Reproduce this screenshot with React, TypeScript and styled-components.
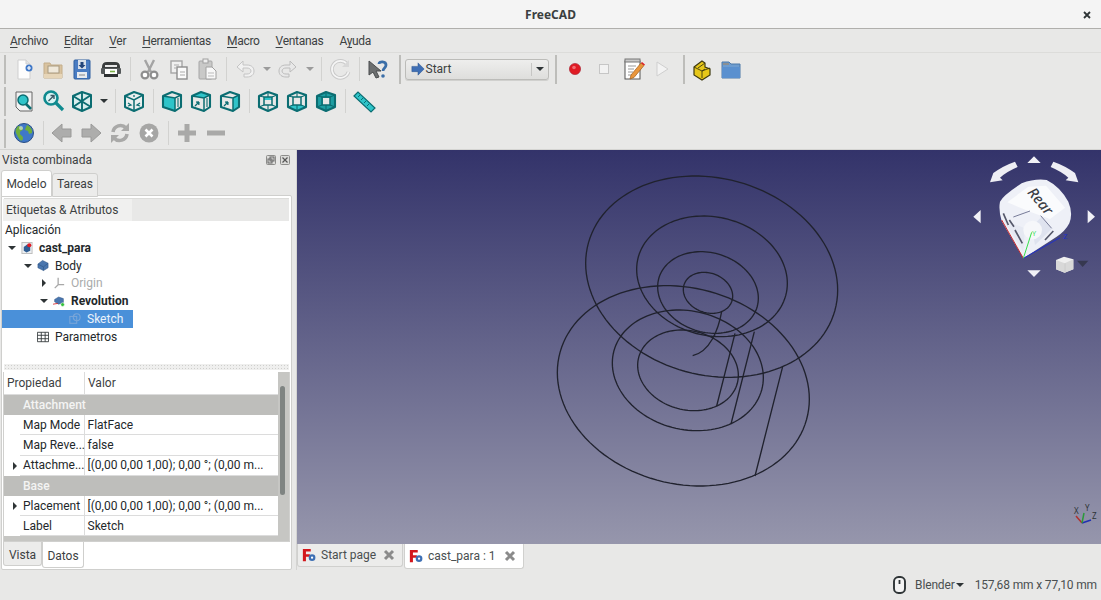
import React from 'react';
import styled, { createGlobalStyle } from 'styled-components';

const Global = createGlobalStyle`
  html, body { margin: 0; padding: 0; height: 100%; overflow: hidden; background: #e8e8e7; }
  #root { height: 100%; }
  * { box-sizing: border-box; }
`;

const Page = styled.div`
  width: 1101px; height: 600px; display: flex; flex-direction: column;
  background: #e8e8e7; color: #2e3436;
  font-family: Roboto, "Noto Sans", sans-serif; font-size: 12px; overflow: hidden;
`;
const TitleBar = styled.header`
  height: 29px; flex: none; background: #f4f4f4; border-bottom: 1px solid #b0afac;
  display: flex; align-items: center; justify-content: center; position: relative;
  font-family: "Noto Sans", sans-serif; font-weight: 700; font-size: 12px; color: #3b3f40;
`;
const CloseGlyph = styled.svg`
  position: absolute; right: 10px; top: 11px; width: 8px; height: 8px;
`;
const MenuBar = styled.nav`
  height: 24px; flex: none; display: flex; align-items: center; padding: 1px 0 0 2px;
  border-bottom: 1px solid #dcdcda; letter-spacing: -0.3px;
`;
const MenuItem = styled.span`
  padding: 0 8px; color: #3c4142; white-space: nowrap;
  u { text-decoration-thickness: 1px; text-underline-offset: 2px; }
`;
const ToolRow = styled.div`
  height: 32px; flex: none; display: flex; align-items: center; padding-left: 4px;
`;
const Grip = styled.i<{ $ml?: number; $mr?: number }>`
  width: 2px; height: 29px; flex: none; background: #bdbdba;
  margin-left: ${p => p.$ml ?? 0}px; margin-right: ${p => p.$mr ?? 3.5}px;
`;
const ToolBtn = styled.span`
  width: 29px; height: 32px; flex: none; display: flex; align-items: center; justify-content: center;
`;
const Caret = styled.span<{ $pale?: boolean }>`
  width: 14px; flex: none; display: flex; justify-content: center;
  &::before {
    content: ''; border-style: solid; border-width: 4px 4.5px 0 4.5px;
    border-color: ${p => (p.$pale ? '#9b9b9b' : '#2e3436')} transparent transparent transparent;
  }
`;
const Sep = styled.span`
  width: 9px; height: 24px; flex: none; display: flex; justify-content: center;
  &::before { content: ''; width: 1px; background: #d2d2d0; }
`;
const Combo = styled.div`
  width: 144px; height: 21px; flex: none; border: 1px solid #bcbcb9; border-radius: 3px;
  background: linear-gradient(#eeeeed, #dededc); display: flex; align-items: center;
  padding-left: 5px; color: #3c4142; box-shadow: 0 1px 0 #d0d0ce;
`;
const ComboLabel = styled.span` margin-left: 1px; flex: 1; `;
const ComboCaret = styled.span`
  width: 17px; height: 13px; border-left: 1px solid #c6c6c4; display: flex; align-items: center; justify-content: center;
  &::before { content: ''; border-style: solid; border-width: 4px 4.5px 0 4.5px; border-color: #2e3436 transparent transparent transparent; }
`;
const Main = styled.main`
  flex: 1; min-height: 0; display: flex; border-top: 1px solid #d4d4d2;
`;
const Dock = styled.aside`
  width: 292px; flex: none; display: flex; flex-direction: column; padding-left: 1px;
`;
const DockTitle = styled.div`
  height: 19px; margin-bottom: 1px; flex: none; display: flex; align-items: center; padding-left: 1px; color: #3c4142;
  justify-content: space-between; padding-right: 2px;
`;
const DockBtns = styled.span` display: flex; gap: 4px; `;
const TabRow = styled.div`
  display: flex; flex: none; align-items: flex-start; height: 26px; position: relative; z-index: 1;
`;
const Tab = styled.span<{ $active?: boolean; $w: number }>`
  width: ${p => p.$w}px; flex: none; display: flex; align-items: center; justify-content: center;
  color: #3c4142;
  border: 1px solid #cfcfcd;
  background: ${p => (p.$active ? '#ffffff' : '#ececeb')};
  height: ${p => (p.$active ? 27 : 24)}px;
  margin-top: ${p => (p.$active ? 0 : 3)}px;
  padding-bottom: ${p => (p.$active ? 0 : 2)}px;
  border-radius: 3px 3px 0 0;
`;
const DockBody = styled.div`
  flex: 1; min-height: 0; background: #fff; border: 1px solid #cfcfcd; border-radius: 0 2px 2px 2px;
  margin-top: -1px; display: flex; flex-direction: column; padding: 1px;
`;
const TreeFrame = styled.div`
  height: 166px; flex: none; margin: 1px 1px 0; display: flex; flex-direction: column; background: #fff;
  border-top: 1px solid #dcdcda;
`;
const TreeHead = styled.div`
  height: 22px; flex: none; background: #e8e8e7; display: flex; margin-left: -1px;
`;
const TreeHeadCell = styled.span`
  width: 129px; background: #f0f0ef; display: flex; align-items: center; padding-left: 3px; color: #3c4142;
`;
const TreeRow = styled.div<{ $selected?: boolean; $depth: number; $bold?: boolean; $dim?: boolean }>`
  height: 17.8px; width: 131px; margin-left: -2px; display: flex; align-items: center; flex: none;
  padding-left: ${p => p.$depth * 16 + 3}px; white-space: nowrap;
  background: ${p => (p.$selected ? '#4a90d9' : 'transparent')};
  color: ${p => (p.$selected ? '#eaf2fb' : p.$dim ? '#a9abab' : '#23282a')};
  font-weight: ${p => (p.$bold ? 700 : 400)};
`;
const TreeTop = styled.div` height: 18px; flex: none; display: flex; align-items: center; padding-left: 1px; color: #23282a; `;
const TreeArrow = styled.span<{ $open?: boolean; $none?: boolean }>`
  width: 14px; margin-right: 2px; flex: none; display: flex; justify-content: center;
  &::before {
    content: ''; border-style: solid; visibility: ${p => (p.$none ? 'hidden' : 'visible')};
    border-width: ${p => (p.$open ? '4px 4px 0 4px' : '4px 0 4px 4px')};
    border-color: ${p => (p.$open ? '#2e3436 transparent transparent transparent' : 'transparent transparent transparent #2e3436')};
  }
`;
const TreeIcon = styled.span` width: 12px; height: 14px; flex: none; margin-right: 6px; display: flex; align-items: center; justify-content: center; `;
const Splitter = styled.div`
  height: 6px; flex: none; margin: 0 1px 2px;
  background-image: radial-gradient(#cfcfcd 0.6px, transparent 0.8px); background-size: 3px 3px;
  background-color: #efefee;
`;
const PropFrame = styled.div`
  height: 170px; flex: none; display: flex; background: #c6c6c3; border: 1px solid #d0d0ce; border-top: 0;
`;
const PropTable = styled.div` width: 274px; flex: none; display: flex; flex-direction: column; background: #fff; `;
const PropHead = styled.div`
  height: 23px; flex: none; display: flex; align-items: center; background: #fff; color: #3c4142;
  border-bottom: 1px solid #dcdcdc;
`;
const HeadCell = styled.span<{ $w?: number }>`
  ${p => (p.$w ? `width:${p.$w}px;flex:none;border-right:1px solid #dcdcdc;` : 'flex:1;')}
  height: 100%; display: flex; align-items: center; padding-left: 3px;
`;
const GroupRow = styled.div`
  height: 20px; flex: none; background: #bebebb; color: #f4f4f3; display: flex; align-items: center; padding-left: 19px; font-weight: 500;
`;
const PropRow = styled.div` height: 20.3px; flex: none; display: flex; align-items: stretch; color: #23282a; `;
const PropGutter = styled.span`
  width: 16px; flex: none; display: flex; align-items: center; justify-content: flex-end; padding-right: 1px;
`;
const PropArrow = styled.i`
  border-style: solid; border-width: 4px 0 4px 4px; border-color: transparent transparent transparent #2e3436; margin-right: 2px;
`;
const PropName = styled.span`
  width: 65px; flex: none; display: flex; align-items: center; padding-left: 3px; white-space: nowrap;
  border-bottom: 1px solid #dcdcdc; border-right: 1px solid #dcdcdc;
`;
const PropValue = styled.span`
  flex: 1; display: flex; align-items: center; padding-left: 2.5px; white-space: nowrap;
  border-bottom: 1px solid #dcdcdc;
`;
const PropFill = styled.div` flex: 1; background: #c6c6c3; `;
const ScrollTrack = styled.div` flex: 1; position: relative; `;
const ScrollThumb = styled.div`
  position: absolute; left: 2px; top: 14px; width: 5px; height: 109px; border-radius: 3px; background: #7f8482;
`;
const BottomTabs = styled.div` height: 26px; flex: none; display: flex; align-items: flex-start; `;
const BTab = styled.span<{ $active?: boolean; $w: number }>`
  width: ${p => p.$w}px; flex: none; display: flex; align-items: center; justify-content: center; color: #3c4142;
  height: ${p => (p.$active ? 26 : 24)}px; padding-top: 2px;
  background: ${p => (p.$active ? '#fff' : '#ececeb')};
  border: 1px solid #cfcfcd; border-top: 0; border-radius: 0 0 3px 3px;
`;
const Gap = styled.div` width: 5px; flex: none; background: #e8e8e7; border-right: 1px solid #d4d4d2; `;
const Center = styled.section` flex: 1; min-width: 0; display: flex; flex-direction: column; `;
const Viewport = styled.div`
  height: 394px; flex: none; position: relative; overflow: hidden;
  background: linear-gradient(#33336a, #9696ac);
`;
const Wire = styled.svg` position: absolute; left: 0; top: 0; width: 804px; height: 394px; `;
const NavCube = styled.svg` position: absolute; right: 0; top: 0; width: 151px; height: 140px; `;
const MiniAxis = styled.svg` position: absolute; right: 4px; bottom: 14px; width: 30px; height: 30px; `;
const DocTabs = styled.div` height: 26px; flex: none; display: flex; align-items: flex-start; `;
const DocTab = styled.span<{ $active?: boolean; $w: number }>`
  width: ${p => p.$w}px; flex: none; display: flex; align-items: center; padding-left: 4px; margin-right: 1px;
  height: ${p => (p.$active ? 25 : 23)}px; color: #4a4f50;
  background: ${p => (p.$active ? '#fff' : '#ececeb')};
  border: 1px solid #d0d0ce; border-top: 0; border-radius: 0 0 3px 3px;
`;
const DocLabel = styled.span` margin-left: 5px; white-space: nowrap; flex: 1; `;
const DocClose = styled.svg` width: 12px; height: 12px; flex: none; margin-right: 7px; `;
const StatusBar = styled.footer`
  height: 30px; flex: none; display: flex; align-items: center; justify-content: flex-end; padding-right: 4px; color: #4a4f50;
  letter-spacing: -0.15px;
`;
const StatusMode = styled.span` display: flex; align-items: center; margin-left: 9px; `;
const StatusDim = styled.span` margin-left: 11px; `;
const ModeCaret = styled.i`
  margin-left: 1px; border-style: solid; border-width: 4px 4px 0 4px; border-color: #2e3436 transparent transparent transparent;
`;

/* ---------- icons ---------- */
const S: React.FC<{ children: React.ReactNode; s?: number }> = ({ children, s = 24 }) => (
  <svg width={s} height={s} viewBox="0 0 24 24">{children}</svg>
);
const T = '#0f8a8f', TF = '#2fc4c9', TD = '#0b6d72';

const NewDoc = () => <S><path d="M6 3h8l4 4v15H6z" fill="#fdfdfd" stroke="#cfcfcf" /><path d="M14 3v4h4" fill="#e4e4e4" stroke="#cfcfcf" /><circle cx="17" cy="11" r="3.500" fill="#3f78c8" /><path d="M15 11h4M17 9v4" stroke="#fff" strokeWidth="1.200" /></S>;
const Open = () => <S><path d="M3 6h6l1 2h11v13H3z" fill="#d9c3a0" stroke="#c4ae8a" /><rect x="7" y="9" width="11" height="7" fill="#efe8da" stroke="#a89a80" /><path d="M3 17h18v4H3z" fill="#e6d5b8" /></S>;
const Save = () => <S><rect x="4" y="3" width="16" height="19" rx="1" fill="#4a7cc2" stroke="#2f5f9f" /><path d="M8 3h8v9H8z" fill="#d7dfe9" /><path d="M10.500 5h3v3h2l-3.500 3.500L8.500 8h2z" fill="#23457a" /><rect x="7" y="15" width="10" height="6" fill="#e8ebef" /><path d="M9 18h6" stroke="#888" /></S>;
const Print = () => <S><path d="M3 10q0-5 5-5h8q5 0 5 5v3H3z" fill="#3a3d3d" /><rect x="6" y="8" width="12" height="2" fill="#e8e8e8" /><rect x="2" y="11" width="20" height="6" rx="1" fill="#55595a" /><rect x="6" y="12" width="12" height="5" fill="#fff" /><path d="M11 14.500h5" stroke="#7db24b" strokeWidth="1.600" /><rect x="5" y="17" width="14" height="3" fill="#2e3132" /></S>;
const Cut = () => <S><path d="M8 3l6 12M17 3l-6 12" stroke="#a4a4a4" strokeWidth="2.400" fill="none" /><circle cx="8" cy="18" r="3.400" fill="#fff" stroke="#8e8e8e" strokeWidth="2.200" /><circle cx="17" cy="18" r="3.400" fill="#fff" stroke="#8e8e8e" strokeWidth="2.200" /></S>;
const Copy = () => <S><rect x="5" y="4" width="11" height="12" fill="#f0f0f0" stroke="#a5a5a5" strokeWidth="1.400" /><rect x="11" y="10" width="10" height="12" fill="#fafafa" stroke="#8e8e8e" strokeWidth="1.400" /><path d="M8 8h5M8 11h2M14 15h5M14 18h5" stroke="#aaa" /></S>;
const Paste = () => <S><rect x="4" y="4" width="13" height="18" rx="1" fill="#c9c9c8" stroke="#a6a6a6" /><rect x="8" y="2" width="5" height="4" fill="#eee" stroke="#a0a0a0" /><path d="M11 10h6l4 4v8H11z" fill="#f8f8f8" stroke="#a0a0a0" /><path d="M13 16h6M13 19h6" stroke="#bbb" /></S>;
const Undo = () => <S><path d="M4 10l6-6v4h4c5 0 7 3 7 6 0 4-3 6-7 6h-3v-3h3c2 0 4-1 4-3s-2-3-4-3h-4v4z" fill="#f1f1f1" stroke="#c4c4c4" /></S>;
const Redo = () => <S><path d="M20 10l-6-6v4h-4c-5 0-7 3-7 6 0 4 3 6 7 6h3v-3h-3c-2 0-4-1-4-3s2-3 4-3h4v4z" fill="#e8e8e8" stroke="#bcbcbc" /></S>;
const RefreshPale = () => <S><path d="M19 7a8.500 8.500 0 1 0 1.500 8" fill="none" stroke="#c9c9c9" strokeWidth="3.600" /><path d="M19 7a8.500 8.500 0 1 0 1.500 8" fill="none" stroke="#f5f5f5" strokeWidth="1.600" /><path d="M21 3v7h-7z" fill="#d8d8d8" /></S>;
const WhatsThis = () => <S><path d="M3 4l0 14 4-3 3 6 3-1-3-6 5 0z" fill="#6c6f70" stroke="#4a4d4e" /><path d="M13 7c0-3 7-3 7 1 0 3-3 2.800-3 6" fill="none" stroke="#3b6ea8" strokeWidth="2.800" /><circle cx="17" cy="19" r="1.800" fill="#3b6ea8" /></S>;
const Arrow16 = () => <svg width="14" height="14" viewBox="0 0 16 16"><path d="M1 5h7V1l7 7-7 7v-4H1z" fill="#3f6fb5" stroke="#2b5590" strokeWidth=".6" /></svg>;
const Rec = () => <S><circle cx="12" cy="12" r="5.600" fill="#e01b24" stroke="#a51d2d" strokeWidth=".6" /><circle cx="11" cy="10.500" r="1.800" fill="#f26d73" /></S>;
const StopSq = () => <S><rect x="7.500" y="7.500" width="9" height="9" fill="#f2f2f2" stroke="#c6c6c6" /></S>;
const Macro = () => <S><rect x="4" y="4" width="15" height="18" fill="#fff" stroke="#555" /><rect x="4" y="2" width="15" height="3" fill="#c9c9c9" stroke="#777" /><path d="M7 9h8M7 12h6M7 15h5M7 18h8" stroke="#999" /><path d="M10 18l10-12 3 2.500-10 12-4 1.500z" fill="#e9963c" stroke="#a25f1a" strokeWidth=".7" /><path d="M20 6l1-1 3 2.500-1 1z" fill="#e01b24" /></S>;
const PlayO = () => <S><path d="M7 5l11 7-11 7z" fill="#f3f3f3" stroke="#cfcfcf" /></S>;
const Part = () => <S><path d="M4 10l8-6 3 2v4l5 2v6l-8 5-8-5z" fill="#e6c71a" stroke="#3f3a10" strokeWidth="1.200" /><path d="M4 10l8 4 3-2M12 14v7M15 6l-7 5M12 14l8-3" fill="none" stroke="#3f3a10" strokeWidth=".9" /></S>;
const Folder = () => <S><path d="M3 5h7l2 2h9v14H3z" fill="#6d9ccf" stroke="#4d79a8" /><path d="M3 10h18v11H3z" fill="#5a90cf" /><path d="M4 6h6v2H4z" fill="#8b8f92" /></S>;
const FitAll = () => <S><path d="M4 3h16v19H8l-4-4z" fill="#f2f2f2" stroke="#666" /><circle cx="11" cy="11" r="5" fill="#2fc4c9" stroke={TD} strokeWidth="1.500" /><path d="M14 15l5 5" stroke={TD} strokeWidth="2.600" /></S>;
const FitSel = () => <S><circle cx="10" cy="9" r="6.500" fill="#d8f4f4" stroke={T} strokeWidth="2.600" /><path d="M7.500 12l5-5M9.500 6.500h3.500V10" stroke="#3d5866" strokeWidth="1.400" fill="none" /><path d="M15 14l7 7" stroke={T} strokeWidth="3.200" /></S>;

const HEX = 'M3 7l9-4 9 3v12l-9 4-9-4z';
const IsoCube = () => <S><path d={HEX} fill="#d9eeee" stroke={TD} strokeWidth="2" strokeLinejoin="round" /><path d="M3 7l18 11M21 6L3 18M12 3v19" stroke={TD} strokeWidth="1.900" /></S>;
const HomeCube = () => <S><path d={HEX} fill="#e9efef" stroke={TD} strokeWidth="2" strokeLinejoin="round" /><path d="M3 7l9 4 9-5M12 11v11" fill="none" stroke={TD} strokeWidth="1.500" /><path d="M12 6v2M6 14l3 2-3 1M18 14l-3 2 3 1" fill="none" stroke={TD} strokeWidth="1.300" /></S>;
const FaceCube: React.FC<{ f: 'front' | 'top' | 'right' }> = ({ f }) => (
  <S>
    {f === 'front' && <path d="M3 7l12 2v13l-12-4z" fill={TF} />}
    <path d="M3 7l9-4 9 3-6 3z" fill={f === 'top' ? TF : 'none'} />
    <path d="M15 9l6-3v12l-6 4z" fill={f === 'right' ? TF : 'none'} />
    <path d="M3 7l9-4 9 3v12l-6 4-12-4z" fill="none" stroke={TD} strokeWidth="2.100" strokeLinejoin="round" />
    <path d="M3 7l12 2 6-3M15 9v13" fill="none" stroke={TD} strokeWidth="1.500" />
    {f !== 'front' && <path d="M6 17l4-4M10 13l-.2 3M10 13l-3 .2" fill="none" stroke={TD} strokeWidth="1.300" />}
    {f !== 'right' && <path d="M18 9v9" stroke={TD} strokeWidth="1.100" />}
  </S>
);
const BackCube: React.FC<{ f: 'rear' | 'bottom' | 'left' }> = ({ f }) => (
  <S>
    {f === 'left' && <path d={HEX} fill="#1d9ea2" />}
    {f === 'left' && <rect x="9" y="9" width="7" height="7" fill="#e8e8e7" />}
    {f === 'rear' && <path d="M8 8h8v3H8z" fill={TF} />}
    {f === 'bottom' && <path d="M8 16h8l5 2-9 4-9-4z" fill={TF} />}
    <path d={HEX} fill="none" stroke={TD} strokeWidth="2.100" strokeLinejoin="round" />
    <rect x="8" y="8" width="8" height="8" fill="none" stroke={TD} strokeWidth="1.500" />
    <path d="M3 7l5 1M21 6l-5 2M3 18l5-2M21 18l-5-2M12 3v5M12 22v-6" stroke={TD} strokeWidth="1.100" />
  </S>
);
const Ruler = () => <S><path d="M2 7l4-4 17 16-4 4z" fill="#2fc4c9" stroke={TD} strokeWidth="1.200" /><path d="M8 6l-2 2M11 9l-2 2M14 12l-2 2M17 15l-2 2" stroke={TD} /></S>;
const Globe = () => <S><circle cx="12" cy="12" r="9.500" fill="#3f78c8" stroke="#2a4f85" /><path d="M6 5c3 0 5 1 5 3s-3 1-3 4 3 2 3 5-2 3-3 2-3-5-4-7 0-5 2-7zM15 4c3 1 6 5 5 8l-3 1-1-3-3-1 1-3z" fill="#6fae3c" /><circle cx="9" cy="7" r="2" fill="#dfeafa" opacity=".6" /></S>;
const GA = ({ flip }: { flip?: boolean }) => <S><g transform={flip ? 'matrix(-1 0 0 1 24 0)' : undefined}><path d="M12 3v5h9v8h-9v5L2 12z" fill="#adadac" stroke="#9a9a99" /></g></S>;
const GRefresh = () => <S><path d="M5 11a7.500 7.500 0 0 1 13-4" fill="none" stroke="#a9a9a8" strokeWidth="3.600" /><path d="M19 13a7.500 7.500 0 0 1-13 4" fill="none" stroke="#a9a9a8" strokeWidth="3.600" /><path d="M21 2v8h-8zM3 22v-8h8z" fill="#a9a9a8" /></S>;
const GStop = () => <S><circle cx="12" cy="12" r="9.500" fill="#a6a6a5" /><path d="M8.500 8.500l7 7M15.500 8.500l-7 7" stroke="#fff" strokeWidth="2.600" /></S>;
const GPlus = () => <S><path d="M9.500 3h5v6.500H21v5h-6.500V21h-5v-6.500H3v-5h6.500z" fill="#a9a9a8" /></S>;
const GMinus = () => <S><rect x="3" y="9.500" width="18" height="5" fill="#a9a9a8" /></S>;
const FcLogo = () => <svg width="14" height="14" viewBox="0 0 16 16"><path d="M1 1h9v3H4.500v3H9v3H4.500v5H1z" fill="#d3171c" /><circle cx="11.500" cy="11" r="3.800" fill="#3d6fb4" /><circle cx="11.500" cy="11" r="1.300" fill="#fff" /></svg>;

const TreeDoc = () => <svg width="13" height="14" viewBox="0 0 13 14"><rect x="1" y="1" width="11" height="12" fill="#eceff2" stroke="#bbb" /><path d="M3 6l4-3 3 2v5l-4 2-3-2z" fill="#2f5d92" /><circle cx="9" cy="4" r="2.200" fill="#e01b24" /></svg>;
const TreeBody = () => <svg width="13" height="13" viewBox="0 0 13 13"><path d="M1 5l5-4 6 3v5l-5 3-6-3z" fill="#4a76ae" stroke="#2c5283" strokeWidth=".6" /><path d="M1 5l6 3 5-4M7 8v4" fill="none" stroke="#2c5283" strokeWidth=".6" /></svg>;
const TreeOrigin = () => <svg width="14" height="14" viewBox="0 0 14 14"><path d="M6 1v8M6 9l7 0M6 9l-4 4" stroke="#a8a8a8" strokeWidth="1.500" fill="none" /></svg>;
const TreeRev = () => <svg width="15" height="14" viewBox="0 0 15 14"><path d="M2 5l5-3 6 2v5l-6 2-5-3z" fill="#4a76ae" stroke="#2c5283" strokeWidth=".6" /><path d="M0 11l6-1" stroke="#d3171c" /><circle cx="12" cy="11.500" r="2.300" fill="#33c13a" stroke="#fff" strokeWidth=".6" /></svg>;
const TreeSketch = () => <svg width="14" height="14" viewBox="0 0 14 14"><rect x="1" y="4" width="8" height="8" fill="none" stroke="#7aa6d8" strokeWidth="1.200" /><circle cx="9" cy="5" r="4" fill="none" stroke="#7aa6d8" strokeWidth="1.200" /></svg>;
const TreeSheet = () => <svg width="14" height="12" viewBox="0 0 14 12"><path d="M.5.500h13v11H.5zM.5 4h13M.5 8h13M5 .500v11M9.500 .500v11" fill="none" stroke="#2e3436" /></svg>;
const Mouse = () => <svg width="13" height="18" viewBox="0 0 13 18"><rect x="1" y="1" width="11" height="16" rx="4.500" fill="#f4f4f4" stroke="#2e3436" strokeWidth="1.900" /><path d="M6.500 4v4" stroke="#2e3436" strokeWidth="1.800" /></svg>;
const XClose = () => <DocClose viewBox="0 0 12 12"><path d="M2 2l8 8M10 2l-8 8" stroke="#8b8b8b" strokeWidth="3" /></DocClose>;
const Tiny = ({ kind }: { kind: 'float' | 'close' }) => (
  <svg width="10" height="10" viewBox="0 0 10 10">
    <rect x=".5" y=".5" width="9" height="9" rx="1" fill="#dcdcda" stroke="#8d8d8b" />
    {kind === 'close' ? <path d="M2.500 2.500l5 5M7.500 2.500l-5 5" stroke="#555" strokeWidth="1.200" /> : <><rect x="2" y="4" width="4" height="4" fill="none" stroke="#666" /><rect x="4" y="2" width="4" height="4" fill="none" stroke="#666" /></>}
  </svg>
);

/* ---------- wireframe: tilted ellipses given by their extents ---------- */
const tilted = (cx: number, cy: number, W: number, H: number, dy: number) => {
  const h = Math.sqrt(H * H - dy * dy);
  let d = '';
  for (let i = 0; i < 120; i++) {
    const t = (i / 120) * Math.PI * 2;
    d += `${i ? 'L' : 'M'}${(cx + W * Math.cos(t)).toFixed(1)} ${(cy + dy * Math.cos(t) + h * Math.sin(t)).toFixed(1)}`;
  }
  return d + 'Z';
};
const rings: [number, number, number, number, number][] = [
  [515, 320, 378, 302, 40],
  [516, 319, 226, 181, 21],
  [504, 367.5, 151, 122.5, 17],
  [504, 368.5, 74, 61.5, 10],
  [430, 647.5, 378, 300.5, 40],
  [443.5, 601, 226.5, 181, 22],
  [444, 601, 151, 121, 15],
];
const Wireframe = () => (
  <Wire viewBox="0 0 804 394">
    <g transform="translate(243 20) scale(.33333)" fill="none" stroke="#20222e" strokeWidth="4">
      {rings.map((r, i) => <path key={i} d={tilted(...r)} />)}
      <path d="M545 425C535 480 510 545 458 557" />
      <path d="M585 490L530 708M643 485L573 762M728 590L645 918" />
    </g>
  </Wire>
);

const Nav = () => (
  <NavCube viewBox="0 15 453 420">
    <path d="M120 112L130 84Q160 62 195 50L203 66Q170 80 150 98L158 106z" fill="#eeeef4" />
    <path d="M385 112L375 84Q345 62 310 50L302 66Q335 80 355 98L347 106z" fill="#eeeef4" />
    <path d="M252 34l20 20h-40zM252 396l20-20h-40zM70 215l22-20v40zM435 215l-22-20v40z" fill="#f1f1f6" />
    <path d="M150 170Q160 150 215 115Q255 100 290 105Q330 125 355 170Q370 205 358 235Q345 260 320 275L220 340L155 228Q145 195 150 170z" fill="#eef0f7" />
    <path d="M172 172L235 125L288 122L345 188L300 222L240 200z" fill="#fafbfd" />
    <path d="M160 225L220 320L225 250z" fill="#e6e9f2" />
    <path d="M275 215L305 252L255 300L245 245z" fill="#dfe3ef" />
    <circle cx="248" cy="255" r="28" fill="#f6f7fa" />
    <path d="M190 216L240 198M272 212L305 250" stroke="#777b98" strokeWidth="3" />
    <path d="M160 205L175 240M178 225L192 245M195 255L217 295M285 285L310 258" stroke="#55586a" strokeWidth="5" />
    <text x="0" y="0" transform="translate(230 143) rotate(50)" fontFamily="Noto Sans, sans-serif" fontSize="44" fontStyle="italic" fontWeight="500" fill="#3a3d45">Rear</text>
    <path d="M155 225L220 340" stroke="#c8262a" strokeWidth="3" />
    <path d="M220 340L330 278" stroke="#2030c8" strokeWidth="3" />
    <path d="M220 340L245 262" stroke="#35e04a" strokeWidth="3" />
    <text x="246" y="272" fontSize="22" fontFamily="Noto Sans, sans-serif" fill="#3fe05a">Y</text>
    <text x="340" y="282" fontSize="22" fontFamily="Noto Sans, sans-serif" fill="#2030c8">Z</text>
    <path d="M318 345l24-10 28 8v30l-26 10-26-10z" fill="#efefef" />
    <path d="M318 345l26 10 26-12v30l-26 10-26-10z" fill="#d8d8d8" />
    <path d="M345 355v28" stroke="#c4c4c4" strokeWidth="2" />
    <path d="M381 347h34l-17 19z" fill="#363850" />
  </NavCube>
);

const Btn = ({ children }: { children: React.ReactNode }) => <ToolBtn>{children}</ToolBtn>;

export default function App() {
  return (
    <Page>
      <Global />
      <TitleBar>
        FreeCAD
        <CloseGlyph viewBox="0 0 8 8"><path d="M1 1l6 6M7 1L1 7" stroke="#2e3436" strokeWidth="1.800" /></CloseGlyph>
      </TitleBar>
      <MenuBar>
        <MenuItem><u>A</u>rchivo</MenuItem>
        <MenuItem><u>E</u>ditar</MenuItem>
        <MenuItem><u>V</u>er</MenuItem>
        <MenuItem><u>H</u>erramientas</MenuItem>
        <MenuItem><u>M</u>acro</MenuItem>
        <MenuItem><u>V</u>entanas</MenuItem>
        <MenuItem>A<u>y</u>uda</MenuItem>
      </MenuBar>
      <ToolRow>
        <Grip />
        <Btn><NewDoc /></Btn><Btn><Open /></Btn><Btn><Save /></Btn><Btn><Print /></Btn>
        <Sep />
        <Btn><Cut /></Btn><Btn><Copy /></Btn><Btn><Paste /></Btn>
        <Sep />
        <Btn><Undo /></Btn><Caret $pale />
        <Btn><Redo /></Btn><Caret $pale />
        <Sep />
        <Btn><RefreshPale /></Btn>
        <Sep />
        <Btn><WhatsThis /></Btn>
        <Grip $ml={6} $mr={4} />
        <Combo><Arrow16 /><ComboLabel>Start</ComboLabel><ComboCaret /></Combo>
        <Grip $ml={6} $mr={4} />
        <Btn><Rec /></Btn><Btn><StopSq /></Btn><Btn><Macro /></Btn><Btn><PlayO /></Btn>
        <Grip $ml={6} $mr={3} />
        <Btn><Part /></Btn><Btn><Folder /></Btn>
      </ToolRow>
      <ToolRow>
        <Grip />
        <Btn><FitAll /></Btn><Btn><FitSel /></Btn><Btn><IsoCube /></Btn><Caret />
        <Sep />
        <Btn><HomeCube /></Btn>
        <Sep />
        <Btn><FaceCube f="front" /></Btn><Btn><FaceCube f="top" /></Btn><Btn><FaceCube f="right" /></Btn>
        <Sep />
        <Btn><BackCube f="rear" /></Btn><Btn><BackCube f="bottom" /></Btn><Btn><BackCube f="left" /></Btn>
        <Sep />
        <Btn><Ruler /></Btn>
      </ToolRow>
      <ToolRow>
        <Grip />
        <Btn><Globe /></Btn>
        <Sep />
        <Btn><GA /></Btn><Btn><GA flip /></Btn><Btn><GRefresh /></Btn><Btn><GStop /></Btn>
        <Sep />
        <Btn><GPlus /></Btn><Btn><GMinus /></Btn>
      </ToolRow>
      <Main>
        <Dock>
          <DockTitle>
            Vista combinada
            <DockBtns><Tiny kind="float" /><Tiny kind="close" /></DockBtns>
          </DockTitle>
          <TabRow>
            <Tab $active $w={51}>Modelo</Tab>
            <Tab $w={46}>Tareas</Tab>
          </TabRow>
          <DockBody>
            <TreeFrame>
              <TreeHead><TreeHeadCell>Etiquetas &amp; Atributos</TreeHeadCell></TreeHead>
              <TreeTop>Aplicación</TreeTop>
              <TreeRow $depth={0} $bold><TreeArrow $open /><TreeIcon><TreeDoc /></TreeIcon>cast_para</TreeRow>
              <TreeRow $depth={1}><TreeArrow $open /><TreeIcon><TreeBody /></TreeIcon>Body</TreeRow>
              <TreeRow $depth={2} $dim><TreeArrow /><TreeIcon><TreeOrigin /></TreeIcon>Origin</TreeRow>
              <TreeRow $depth={2} $bold><TreeArrow $open /><TreeIcon><TreeRev /></TreeIcon>Revolution</TreeRow>
              <TreeRow $depth={3} $selected><TreeArrow $none /><TreeIcon><TreeSketch /></TreeIcon>Sketch</TreeRow>
              <TreeRow $depth={1}><TreeArrow $none /><TreeIcon><TreeSheet /></TreeIcon>Parametros</TreeRow>
            </TreeFrame>
            <Splitter />
            <PropFrame>
              <PropTable>
                <PropHead><HeadCell $w={81}>Propiedad</HeadCell><HeadCell>Valor</HeadCell></PropHead>
                <GroupRow>Attachment</GroupRow>
                <PropRow><PropGutter /><PropName>Map Mode</PropName><PropValue>FlatFace</PropValue></PropRow>
                <PropRow><PropGutter /><PropName>Map Reve...</PropName><PropValue>false</PropValue></PropRow>
                <PropRow><PropGutter><PropArrow /></PropGutter><PropName>Attachme...</PropName><PropValue>[(0,00 0,00 1,00); 0,00 °; (0,00 m...</PropValue></PropRow>
                <GroupRow>Base</GroupRow>
                <PropRow><PropGutter><PropArrow /></PropGutter><PropName>Placement</PropName><PropValue>[(0,00 0,00 1,00); 0,00 °; (0,00 m...</PropValue></PropRow>
                <PropRow><PropGutter /><PropName>Label</PropName><PropValue>Sketch</PropValue></PropRow>
                <PropFill />
              </PropTable>
              <ScrollTrack><ScrollThumb /></ScrollTrack>
            </PropFrame>
            <BottomTabs>
              <BTab $w={39}>Vista</BTab>
              <BTab $active $w={42}>Datos</BTab>
            </BottomTabs>
          </DockBody>
        </Dock>
        <Gap />
        <Center>
          <Viewport>
            <Wireframe />
            <Nav />
            <MiniAxis viewBox="0 0 30 30">
              <path d="M15 23L9 16" stroke="#b0302f" strokeWidth="1.500" />
              <path d="M15 23L24 20" stroke="#2030b0" strokeWidth="1.500" />
              <path d="M15 23L17 13" stroke="#2a9a3a" strokeWidth="1.500" />
              <text x="7" y="14" fontSize="8" fontFamily="Noto Sans, sans-serif" fill="#2e3436">X</text>
              <text x="18" y="11" fontSize="8" fontFamily="Noto Sans, sans-serif" fill="#2e3436">Y</text>
              <text x="25" y="19" fontSize="8" fontFamily="Noto Sans, sans-serif" fill="#2e3436">Z</text>
            </MiniAxis>
          </Viewport>
          <DocTabs>
            <DocTab $w={106}><FcLogo /><DocLabel>Start page</DocLabel><XClose /></DocTab>
            <DocTab $active $w={120}><FcLogo /><DocLabel>cast_para : 1</DocLabel><XClose /></DocTab>
          </DocTabs>
        </Center>
      </Main>
      <StatusBar>
        <Mouse />
        <StatusMode>Blender<ModeCaret /></StatusMode>
        <StatusDim>157,68 mm x 77,10 mm</StatusDim>
      </StatusBar>
    </Page>
  );
}
